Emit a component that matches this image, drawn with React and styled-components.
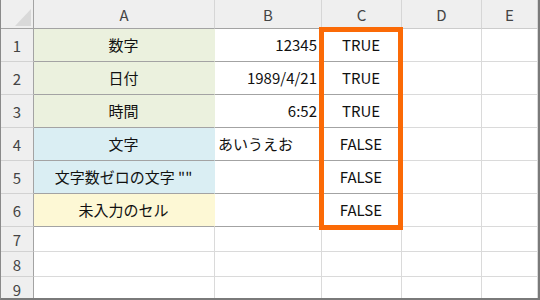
import React from 'react';
import styled, { createGlobalStyle } from 'styled-components';

const GlobalStyle = createGlobalStyle`
  html, body {
    margin: 0;
    padding: 0;
    background: #ffffff;
  }
  body {
    font-family: "Noto Sans CJK JP", "Noto Sans", sans-serif;
  }
`;

const GREEN = '#ebf1de';
const BLUE = '#daeef3';
const YELLOW = '#fdf8d5';

const Sheet = styled.div`
  position: relative;
  box-sizing: border-box;
  width: 540px;
  height: 300px;
  overflow: hidden;
  border-left: 1px solid #8a8a8a;
  border-right: 2px solid #7a7a7a;
  border-bottom: 2px solid #7a7a7a;
  display: grid;
  grid-template-columns: 33px 181px 107px 80px 80px 1fr;
  grid-template-rows: 29px repeat(6, 33px) repeat(3, 25px);
  align-content: start;
  font-size: 15px;
`;

const Corner = styled.div`
  box-sizing: border-box;
  background: #efefef;
  border-right: 1px solid #a3a3a3;
  border-bottom: 1px solid #a3a3a3;
  display: flex;
  justify-content: flex-end;
  align-items: flex-end;
  padding: 0 2px 2px 0;
`;

const CornerMark = styled.span`
  width: 16px;
  height: 17px;
  background: #d9d9d9;
  clip-path: polygon(100% 0, 100% 100%, 0 100%);
`;

const ColHead = styled.div`
  box-sizing: border-box;
  background: #efefef;
  color: #444444;
  border-right: 1px solid #d6d6d6;
  border-bottom: 1px solid ${({ $dark }) => ($dark ? '#a3a3a3' : '#cccccc')};
  display: flex;
  align-items: center;
  justify-content: center;
  line-height: 1;
`;

const RowHead = styled.div`
  box-sizing: border-box;
  background: #efefef;
  color: #444444;
  border-right: 1px solid #a3a3a3;
  border-bottom: 1px solid #d2d2d2;
  display: flex;
  align-items: center;
  justify-content: center;
  line-height: 1;
`;

const Cell = styled.div`
  box-sizing: border-box;
  background: ${({ $fill }) => $fill || '#ffffff'};
  color: #111111;
  border-right: 1px solid ${({ $joined }) => ($joined ? 'transparent' : '#dadada')};
  border-bottom: 1px solid ${({ $dark }) => ($dark ? '#a3a3a3' : '#dadada')};
  display: flex;
  align-items: center;
  justify-content: ${({ $align }) =>
    $align === 'right' ? 'flex-end' : $align === 'left' ? 'flex-start' : 'center'};
  padding: 0 4px 2px 3px;
  white-space: nowrap;
  overflow: hidden;
  line-height: 1;
`;

// orange frame drawn over column C, rows 1-6
const Highlight = styled.div`
  position: absolute;
  left: 318px;
  top: 27px;
  width: 84px;
  height: 203px;
  box-sizing: border-box;
  border: 5px solid #fb6a06;
  pointer-events: none;
`;

const columns = ['A', 'B', 'C', 'D', 'E'];

const rows = [
  { a: '数字', b: '12345', bAlign: 'right', c: 'TRUE', fill: GREEN },
  { a: '日付', b: '1989/4/21', bAlign: 'right', c: 'TRUE', fill: GREEN },
  { a: '時間', b: '6:52', bAlign: 'right', c: 'TRUE', fill: GREEN },
  { a: '文字', b: 'あいうえお', bAlign: 'left', c: 'FALSE', fill: BLUE },
  { a: '文字数ゼロの文字 ""', b: '', c: 'FALSE', fill: BLUE },
  { a: '未入力のセル', b: '', c: 'FALSE', fill: YELLOW },
];

export default function App() {
  return (
    <>
      <GlobalStyle />
      <Sheet>
        <Corner>
          <CornerMark />
        </Corner>
        {columns.map((col, i) => (
          <ColHead key={col} $dark={i < 3}>
            {col}
          </ColHead>
        ))}

        {rows.map((row, i) => (
          <React.Fragment key={i}>
            <RowHead>{i + 1}</RowHead>
            <Cell $fill={row.fill} $dark $joined>
              {row.a}
            </Cell>
            <Cell $dark $align={row.bAlign}>
              {row.b}
            </Cell>
            <Cell $dark>{row.c}</Cell>
            <Cell />
            <Cell />
          </React.Fragment>
        ))}

        {[7, 8, 9].map((n) => (
          <React.Fragment key={n}>
            <RowHead>{n}</RowHead>
            <Cell />
            <Cell />
            <Cell />
            <Cell />
            <Cell />
          </React.Fragment>
        ))}

        <Highlight />
      </Sheet>
    </>
  );
}
